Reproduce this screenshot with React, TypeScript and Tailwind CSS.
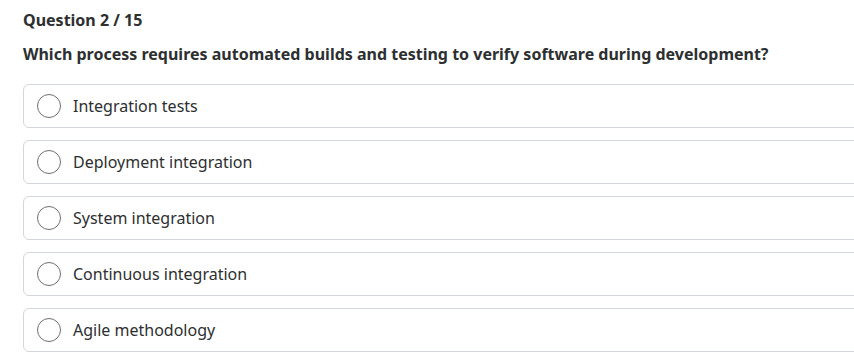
const options = [
  "Integration tests",
  "Deployment integration",
  "System integration",
  "Continuous integration",
  "Agile methodology",
]

export default function App() {
  return (
    <div className="h-[359px] w-[854px] overflow-hidden bg-white font-['Noto_Sans',sans-serif] text-[#2d2f31]">
      <div className="w-[880px] pl-[23px] pt-[8px]">
        <div className="text-[16px] font-bold leading-[24px]">Question 2 / 15</div>
        <div className="mt-[10px] text-[16px] font-bold leading-[24px]">
          Which process requires automated builds and testing to verify software during development?
        </div>
        <div className="mt-[18px] flex flex-col gap-[12px]">
          {options.map((opt) => (
            <label
              key={opt}
              className="flex h-[44px] cursor-pointer items-center rounded-[6px] border border-[#d1d7dc] pl-[13px]"
            >
              <span className="h-[24px] w-[24px] shrink-0 rounded-full border border-[#6a6f73]" />
              <span className="ml-[12px] text-[16px] leading-[22px]">{opt}</span>
            </label>
          ))}
        </div>
      </div>
    </div>
  )
}
